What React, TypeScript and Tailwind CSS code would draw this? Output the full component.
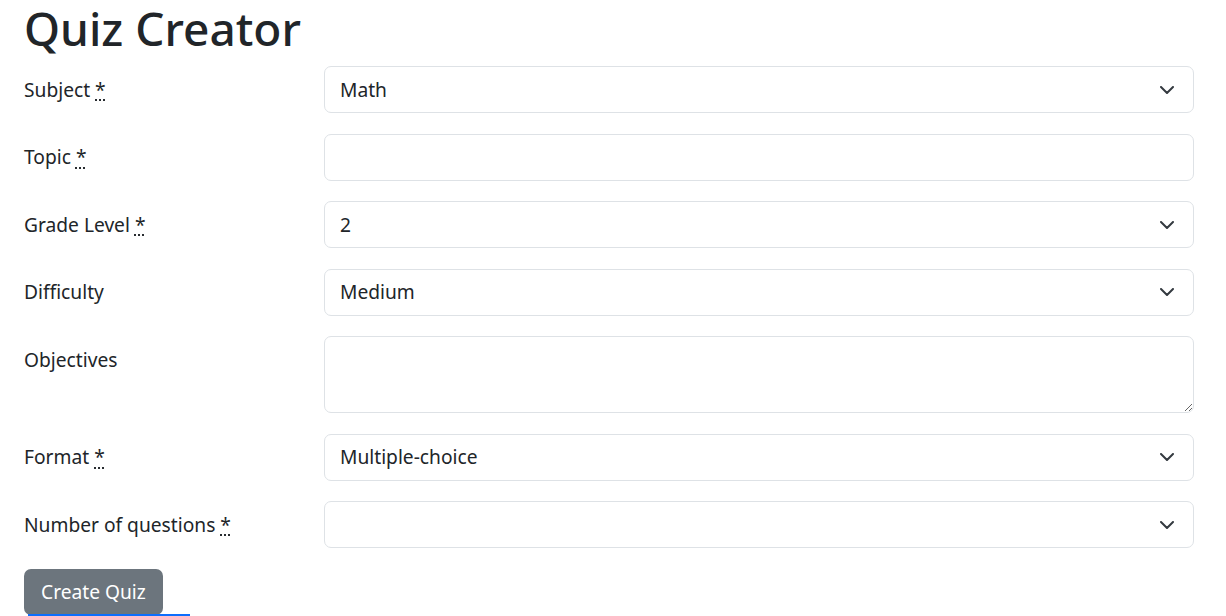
import React from "react";

const font = { fontFamily: "'Noto Sans', 'Open Sans', sans-serif" };

function Req() {
  return (
    <abbr title="required" className="underline decoration-dotted underline-offset-[3px]">
      *
    </abbr>
  );
}

function Chevron() {
  return (
    <svg width="14" height="8" viewBox="0 0 14 8" fill="none" className="shrink-0">
      <path d="M1 1l6 6 6-6" stroke="#343a40" strokeWidth="2" strokeLinecap="round" strokeLinejoin="round" />
    </svg>
  );
}

function Label({ children }: { children: React.ReactNode }) {
  return (
    <div className="w-[300px] shrink-0 h-[47px] pt-[1px] flex items-center text-[19.2px] leading-[1.5]">
      <span>{children}</span>
    </div>
  );
}

function Select({ value }: { value: string }) {
  return (
    <div className="flex-1 h-[47px] border border-[#dee2e6] rounded-[7px] bg-white flex items-center justify-between pl-[15px] pr-[19px] text-[19.2px] leading-[1.5]">
      <span className="pt-[1px]">{value}</span>
      <Chevron />
    </div>
  );
}

function Row({ label, children }: { label: React.ReactNode; children: React.ReactNode }) {
  return (
    <div className="flex items-start">
      <Label>{label}</Label>
      {children}
    </div>
  );
}

export default function App() {
  return (
    <div className="w-[1226px] h-[616px] overflow-hidden bg-white text-[#212529] pl-[24px] pr-[32px]" style={font}>
      <h1 className="text-[46px] leading-[56px] font-medium mb-[10px] mt-0">Quiz Creator</h1>
      <div className="flex flex-col gap-[20.5px]">
        <Row label={<>Subject <Req /></>}>
          <Select value="Math" />
        </Row>
        <Row label={<>Topic <Req /></>}>
          <input
            type="text"
            className="flex-1 h-[47px] border border-[#dee2e6] rounded-[7px] bg-white px-[15px] text-[19.2px] outline-none"
          />
        </Row>
        <Row label={<>Grade Level <Req /></>}>
          <Select value="2" />
        </Row>
        <Row label="Difficulty">
          <Select value="Medium" />
        </Row>
        <Row label="Objectives">
          <textarea className="flex-1 h-[77px] border border-[#dee2e6] rounded-[7px] bg-white px-[15px] py-[7px] text-[19.2px] outline-none resize-y" />
        </Row>
        <Row label={<>Format <Req /></>}>
          <Select value="Multiple-choice" />
        </Row>
        <Row label={<>Number of questions <Req /></>}>
          <Select value="" />
        </Row>
        <div className="flex flex-col items-start">
          <button className="h-[46px] px-[17px] pt-[1px] rounded-[7px] bg-[#6c757d] text-white text-[19.2px] leading-[1.5]">
            Create Quiz
          </button>
          <div className="ml-[4px] -mt-[1px] w-[162px] h-[4px] bg-[#0d6efd]" />
        </div>
      </div>
    </div>
  );
}
